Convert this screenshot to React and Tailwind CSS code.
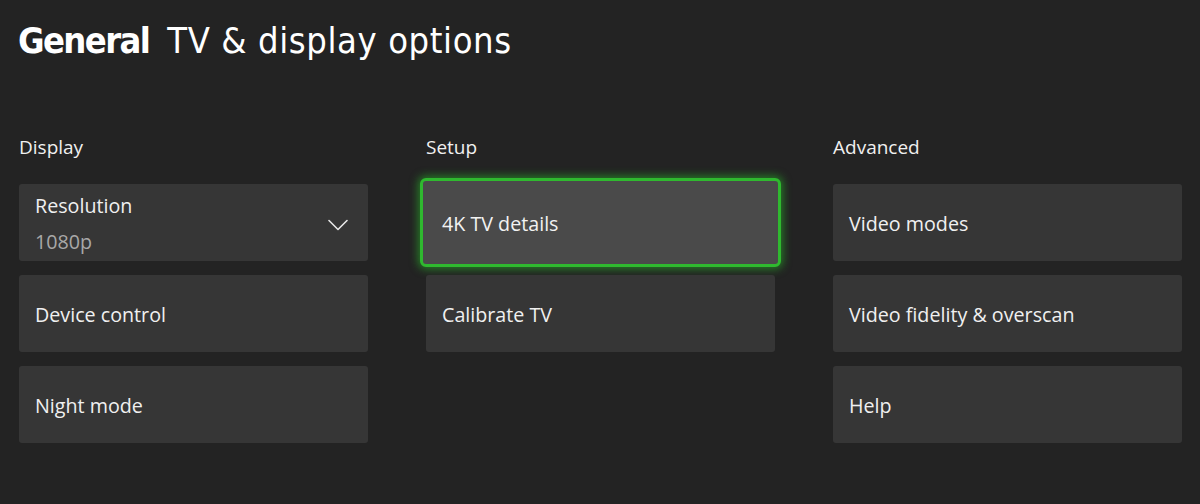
import React from 'react';

const sections = [
  { title: 'Display', items: [{ label: 'Resolution', value: '1080p', dropdown: true }, { label: 'Device control' }, { label: 'Night mode' }] },
  { title: 'Setup', items: [{ label: '4K TV details', focused: true }, { label: 'Calibrate TV' }] },
  { title: 'Advanced', items: [{ label: 'Video modes' }, { label: 'Video fidelity & overscan' }, { label: 'Help' }] },
];

const Chevron = () => (
  <svg width="20" height="12" viewBox="0 0 20 12" fill="none" className="shrink-0 mt-[2px]">
    <path d="M1 1.5 L10 10.5 L19 1.5" stroke="#e6e6e6" strokeWidth="1.6" strokeLinecap="round" strokeLinejoin="round" />
  </svg>
);

const Tile = ({ item }) => {
  if (item.focused) {
    return (
      <div className="-m-[6px] h-[89px] rounded-[6px] border-[3px] border-[#2fb92f] bg-[#4a4a4a] px-[19px] pt-[3px] flex items-center shadow-[0_0_8px_2px_rgba(40,200,40,0.55)]">
        <span className="text-[19.7px] text-[#f2f2f2]">{item.label}</span>
      </div>
    );
  }
  return (
    <div className="h-[77px] rounded-[3px] bg-[#363636] pl-[16px] pr-[20px] pt-[3px] flex items-center justify-between">
      {item.dropdown ? (
        <div className="flex flex-col leading-[1.15]">
          <span className="text-[19.7px] text-[#f0f0f0]">{item.label}</span>
          <span className="text-[19.7px] text-[#a8a8a8] mt-[13px]">{item.value}</span>
        </div>
      ) : (
        <span className="text-[19.7px] text-[#f0f0f0]">{item.label}</span>
      )}
      {item.dropdown && <Chevron />}
    </div>
  );
};

export default function App() {
  return (
    <div className="w-[1200px] h-[504px] bg-[#232323] overflow-hidden" style={{ fontFamily: '"Open Sans", "Noto Sans", sans-serif' }}>
      <div className="pl-[18px] pt-[17px] flex items-baseline text-white text-[36px] leading-[48px]" style={{ fontFamily: '"DejaVu Sans Condensed", "DejaVu Sans", sans-serif' }}>
        <span className="font-bold tracking-[-1.6px]">General</span>
        <span className="ml-[18px] tracking-[0.6px]">TV &amp; display options</span>
      </div>
      <div className="mt-[69px] px-[19px] grid grid-cols-[349px_349px_349px] gap-x-[58px]">
        {sections.map((s) => (
          <div key={s.title}>
            <div className="text-[19px] text-[#f0f0f0] leading-[26px] mb-[24px]">{s.title}</div>
            <div className="flex flex-col gap-[14px]">
              {s.items.map((it) => (
                <Tile key={it.label} item={it} />
              ))}
            </div>
          </div>
        ))}
      </div>
    </div>
  );
}
